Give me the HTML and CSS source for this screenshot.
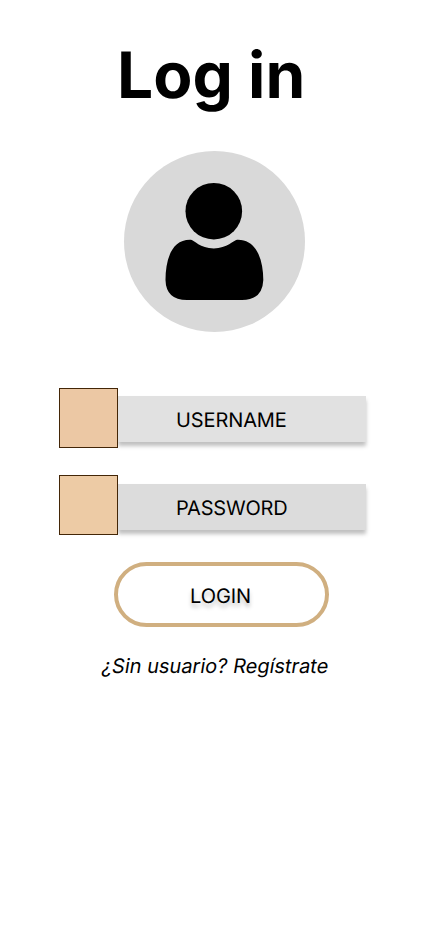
FILE: index.html
```html
<!DOCTYPE html>
<html lang="es">
<head>
<meta charset="utf-8">
<title>Log in</title>
<link rel="stylesheet" href="styles.css">
</head>
<body>
<main class="screen">
  <h1 class="title">Log in</h1>
  <div class="avatar">
    <svg class="avatar-icon" viewBox="0 0 99 118" aria-hidden="true">
      <circle cx="48.8" cy="28.2" r="28.3"/>
      <path d="M26 56.8C29 57 35 65.5 48.8 65.5C62 65.5 69 57 72 56.8C91 56 98.3 76 98.3 97Q97.5 117 77 117H22Q1 117 0.5 97C0.5 76 7 56 26 56.8Z"/>
    </svg>
  </div>
  <form class="form">
    <div class="field">
      <span class="field-tile"></span>
      <span class="field-box">USERNAME</span>
    </div>
    <div class="field field-password">
      <span class="field-tile"></span>
      <span class="field-box">PASSWORD</span>
    </div>
    <button class="login" type="button">LOGIN</button>
  </form>
  <p class="register">¿Sin usuario? Regístrate</p>
</main>
</body>
</html>
```
FILE: styles.css
```css
* { box-sizing: border-box; }
body { margin: 0; background: #fff; color: #000; font-family: Inter, sans-serif; text-rendering: geometricPrecision; }
.screen { width: 430px; height: 932px; overflow: hidden; }
.title { margin: 37px 0 0 117px; font-size: 64px; line-height: 77px; font-weight: 700; white-space: nowrap; }
.avatar { width: 181px; height: 181px; margin: 37px 0 0 124px; padding: 32px 0 0 41px; border-radius: 50%; background: #d9d9d9; }
.avatar-icon { display: block; width: 99px; height: 118px; overflow: visible; }
.form { margin: 56px 0 0 59px; }
.field { display: flex; align-items: flex-start; height: 60px; }
.field-password { margin-top: 27px; }
.field-tile { position: relative; z-index: 1; width: 59px; height: 60px; border: 1px solid #432607; background: #ecc8a4; }
.field-password .field-tile { background: #edcba5; }
.field-box { width: 248px; height: 46px; margin-top: 8px; padding-left: 58px; background: #e1e1e1; box-shadow: 0 4px 4px rgba(0,0,0,.25); font-size: 20px; line-height: 48px; letter-spacing: -.1px; }
.field-password .field-box { margin-top: 9px; background: #dcdcdc; letter-spacing: -.2px; }
.login { display: block; width: 215px; height: 65px; margin: 27px 0 0 55px; padding: 2px 2px 0 0; border: 4px solid #d0af80; border-radius: 33px; background: #fff; font: 20px/24px Inter, sans-serif; text-rendering: geometricPrecision; letter-spacing: -.1px; color: #000; text-shadow: 0 4px 4px rgba(0,0,0,.25); }
.register { width: max-content; margin: 27px 0 0 102px; font-size: 20px; line-height: 24px; white-space: nowrap; transform: skewX(-9.4deg); }
```
